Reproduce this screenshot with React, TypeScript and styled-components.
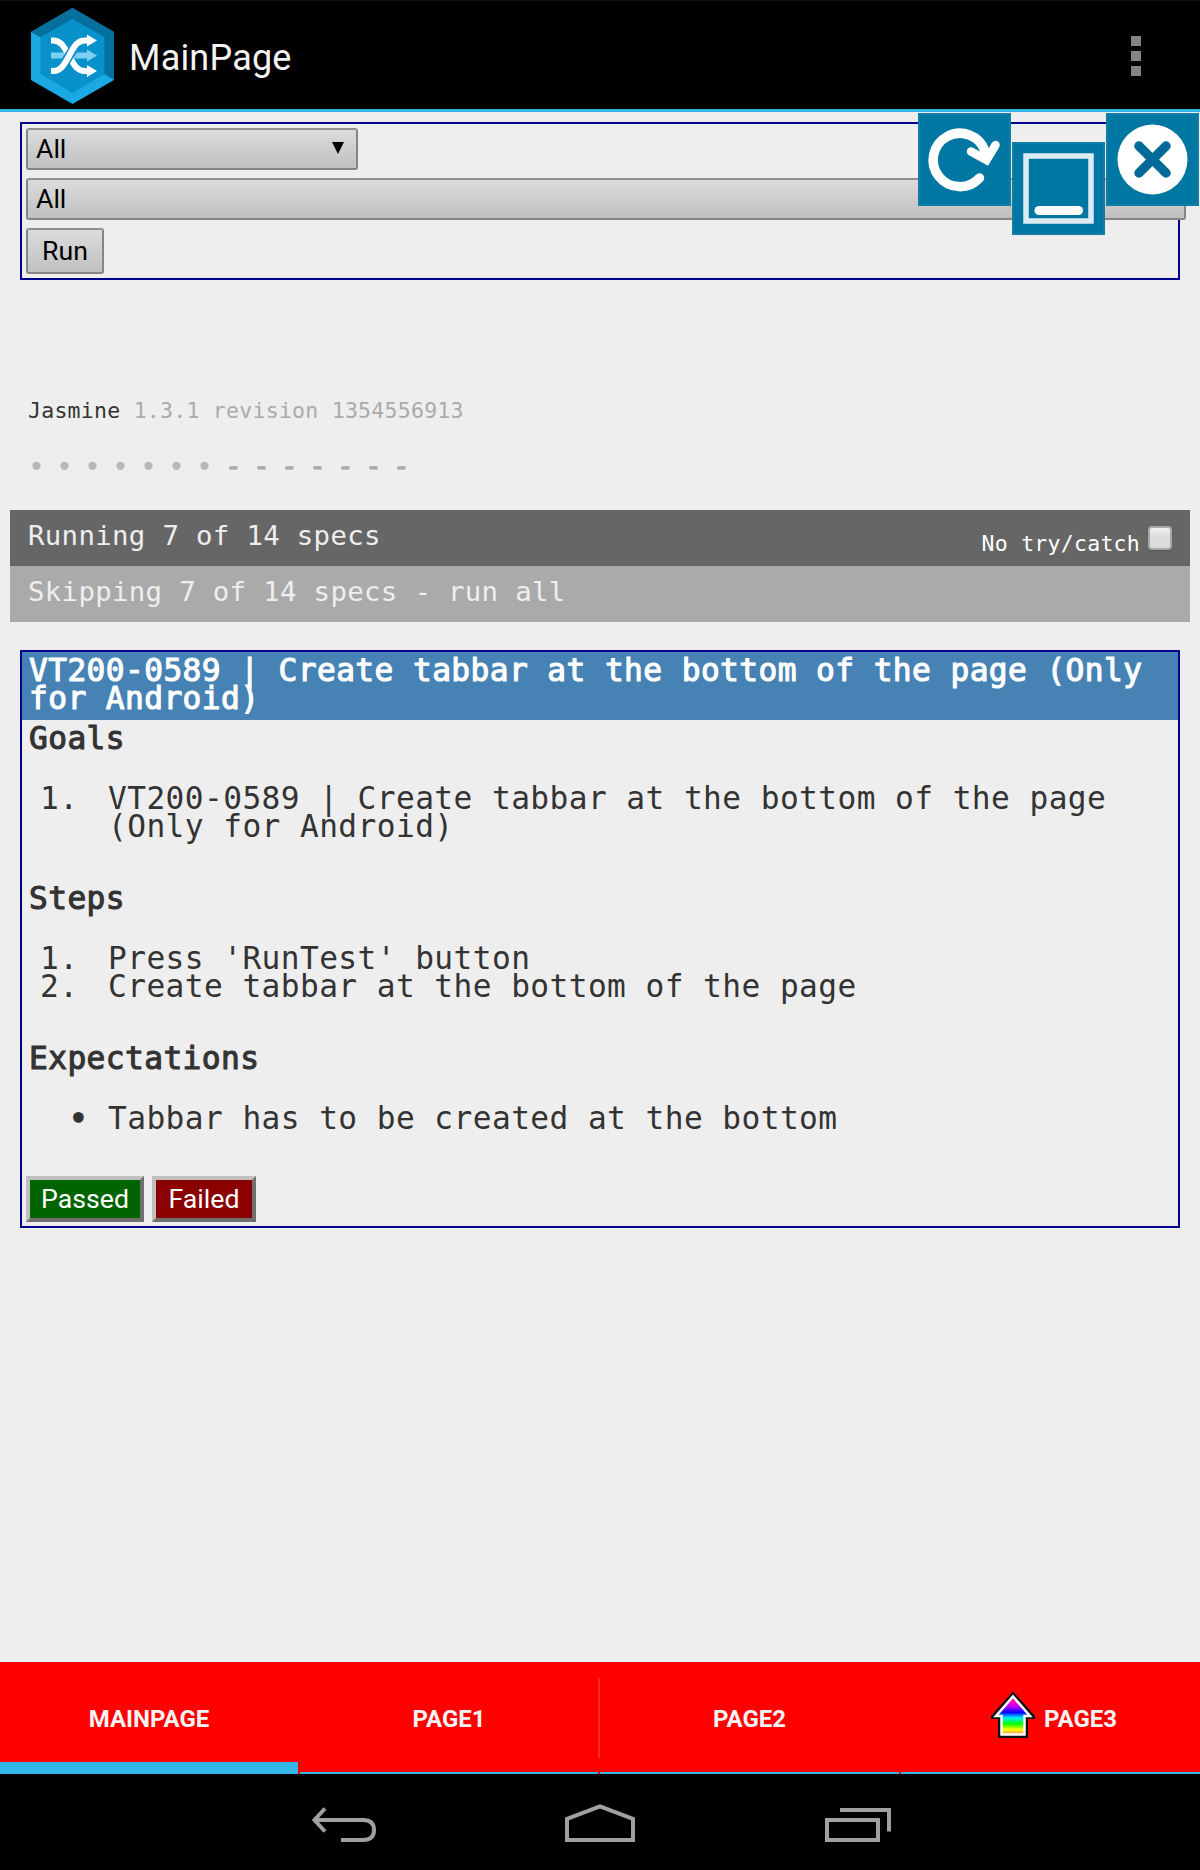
import React from "react";
import styled, { createGlobalStyle, css } from "styled-components";

const Global = createGlobalStyle`
  * { box-sizing: border-box; }
  body { margin: 0; background: #eee; }
`;

const Screen = styled.div`
  display: flex;
  flex-direction: column;
  position: relative;
  width: 1200px;
  height: 1870px;
  overflow: hidden;
  background: #eee;
  color: #333;
  font-family: "Droid Sans Mono", "DejaVu Sans Mono", monospace;
`;

const ActionBar = styled.header`
  display: flex;
  align-items: center;
  height: 112px;
  flex: none;
  padding: 0 59px 0 30px;
  background: #000;
  border-top: 1px solid #111;
  border-bottom: 3px solid #33b5e5;
`;

const LogoSvg = styled.svg`
  margin-top: 1px;
`;

const AppTitle = styled.h1`
  flex: 1;
  margin: 5px 0 0 13px;
  font: 400 36px/42px Roboto, sans-serif;
  letter-spacing: 0.2px;
  color: #f3f3f3;
`;

const Overflow = styled.div`
  display: grid;
  gap: 5px;
  margin-top: 1px;
`;

const Square = styled.i`
  width: 10px;
  height: 10px;
  background: #848484;
`;

const FloatingTools = styled.div`
  position: absolute;
  top: 113px;
  right: 1px;
  display: flex;
  gap: 1px;
  align-items: flex-start;
`;

const Tool = styled.div<{ $drop?: boolean }>`
  width: 93px;
  height: 93px;
  margin-top: ${(p) => (p.$drop ? 29 : 0)}px;
  background: #0077a2;
  box-shadow: inset 0 0 0 2px #0f7fa8;
  svg { display: block; }
`;

const Content = styled.main`
  flex: 1;
  padding: 10px 10px 0;
`;

const Filters = styled.section`
  display: flex;
  flex-direction: column;
  align-items: flex-start;
  gap: 8px;
  height: 158px;
  margin: 0 10px;
  padding: 4px;
  border: 2px solid #00008b;
`;

const control = css`
  border: 2px solid #858585;
  border-top-color: #909090;
  border-radius: 3px;
  background: linear-gradient(#dcdcdc, #c0c0c0);
  color: #000;
  font: 400 26.67px/32px Roboto, sans-serif;
`;

const Select = styled.div<{ $width: number }>`
  ${control}
  display: flex;
  justify-content: space-between;
  width: ${(p) => p.$width}px;
  height: 42px;
  padding: 3px 12px 0 8px;
  flex: none;
`;

const Caret = styled.i`
  width: 12px;
  height: 12px;
  margin-top: 9px;
  background: #000;
  clip-path: polygon(0 0, 100% 0, 50% 100%);
`;

const RunButton = styled.button`
  ${control}
  width: 78px;
  height: 46px;
  padding: 0;
`;

const Banner = styled.div`
  height: 28px;
  margin-top: 117px;
  padding-left: 18px;
  font-size: 21.5px;
  line-height: 28px;
  letter-spacing: 0.26px;
`;

const Version = styled.span`
  color: #aaa;
`;

const Symbols = styled.ul`
  display: flex;
  height: 28px;
  margin: 28px 0 29px;
  padding: 0 0 0 18px;
  list-style: none;
  font-size: 28px;
  line-height: 28px;
`;

const Mark = styled.li<{ $skipped?: boolean }>`
  width: 28px;
  padding-left: ${(p) => (p.$skipped ? 1 : 0)}px;
  color: ${(p) => (p.$skipped ? "#aaa" : "#b8b8b8")};
  -webkit-text-stroke: ${(p) => (p.$skipped ? "0.8px #aaa" : "0")};
`;

const Bar = styled.div<{ $light?: boolean }>`
  display: flex;
  justify-content: space-between;
  height: 56px;
  padding: 0 18px;
  background: ${(p) => (p.$light ? "#aaa" : "#666")};
  color: #eee;
  font-size: 27.4px;
  line-height: 52px;
  letter-spacing: 0.31px;
`;

const TryCatch = styled.label`
  display: flex;
  gap: 8px;
  color: #fff;
  font-size: 21.5px;
  line-height: 68px;
  letter-spacing: 0.26px;
`;

const Check = styled.i`
  width: 24px;
  height: 24px;
  margin-top: 16px;
  border: 2px solid #a8a8a8;
  border-radius: 4px;
  background: linear-gradient(#eee, #dcdcdc 50%);
  box-shadow: 0 1px 1px #555;
`;

const Spec = styled.section`
  height: 578px;
  margin: 28px 10px 0;
  border: 2px solid #00008b;
  font-size: 31.2px;
  line-height: 28px;
  letter-spacing: 0.42px;
`;

const SpecTitle = styled.h2`
  height: 68px;
  margin: 0;
  padding: 4px 6px 0 7px;
  background: #4682b4;
  color: #fff;
  font: inherit;
  -webkit-text-stroke: 1.1px #fff;
`;

const Part = styled.div`
  padding: 4px 6px 40px;
  h3 {
    margin: 0 0 32px 1px;
    font: inherit;
    -webkit-text-stroke: 1.1px #333;
  }
`;

const Item = styled.div`
  display: grid;
  grid-template-columns: 80px 1fr;
`;

const Marker = styled.span<{ $bullet?: boolean }>`
  padding-left: ${(p) => (p.$bullet ? 41 : 12)}px;
  -webkit-text-stroke: ${(p) => (p.$bullet ? "1.5px #333" : "0")};
`;

const Verdicts = styled.div`
  display: flex;
  gap: 8px;
  padding: 4px 0 0 4px;
`;

const Verdict = styled.button<{ $color: string; $width: number }>`
  width: ${(p) => p.$width}px;
  height: 46px;
  padding: 0;
  border: 4px solid;
  border-color: #c0c0c0 #6f6f6f #6f6f6f #c0c0c0;
  background: ${(p) => p.$color};
  color: #fff;
  font: 400 26.67px/34px Roboto, sans-serif;
`;

const TabBar = styled.nav`
  display: grid;
  grid-template-columns: 298px 298px 299px 299px;
  gap: 2px;
  height: 112px;
  flex: none;
  background: #f00;
`;

const Tab = styled.div<{ $active?: boolean; $icon?: boolean }>`
  position: relative;
  display: flex;
  align-items: center;
  justify-content: center;
  gap: 9px;
  padding: 2px 0 0 ${(p) => (p.$icon ? 7 : 0)}px;
  box-shadow: inset 0 ${(p) => (p.$active ? -12 : -2)}px #33b5e5;
  color: #f3f3f3;
  font: 700 24px/28px Roboto, sans-serif;
  & + &::before {
    content: "";
    position: absolute;
    left: -2px;
    top: 16px;
    width: 2px;
    height: 80px;
    background: #ff2a2a;
  }
`;

const HouseSvg = styled.svg`
  margin-bottom: 7px;
`;

const NavBar = styled.footer`
  display: flex;
  justify-content: center;
  gap: 176px;
  height: 96px;
  flex: none;
  padding-top: 26px;
  background: #000;
`;

const Logo = () => (
  <LogoSvg width="86" height="98" viewBox="30 7 86 98">
    <path d="M72.5 8 114 32v48L72.5 104 31 80V32Z" fill="#1ba9e3" />
    <path d="M72.5 8 114 32v48L104.5 74 72.5 56 40.5 37.5 31 32Z" fill="#056f9d" />
    <path d="m72.5 19 32 18v37l-32 19-32-19V37Z" fill="#0991cb" />
    <g fill="none" strokeWidth="6">
      <path d="M51 55.5h37" stroke="#7bcff2" />
      <path d="M51 40.500h2c7 0 10 4 16 15.500 6 11 9 15 16 15h3" stroke="#fff" />
      <path d="M58 69c4-2 7-6 11-13s7-11 11-13" stroke="#0991cb" strokeWidth="9.5" />
      <path d="M51 71h2c7 0 10-4 16-15 6-11.500 9-15.500 16-15.500h3" stroke="#fff" />
    </g>
    <path d="m87 49.500 10 6-10 6Z" fill="#7bcff2" />
    <path d="m87 34.500 10 6-10 6ZM87 65l10 6-10 6Z" fill="#fff" />
  </LogoSvg>
);

const HouseArrow = () => (
  <HouseSvg width="44" height="50" viewBox="0 0 44 50">
    <defs>
      <linearGradient id="rainbow" x1="0" y1="0" x2="0" y2="1">
        <stop offset="0" stopColor="#ff3030" />
        <stop offset=".16" stopColor="#f0c" />
        <stop offset=".28" stopColor="#a0f" />
        <stop offset=".42" stopColor="#00f" />
        <stop offset=".56" stopColor="#0ef" />
        <stop offset=".72" stopColor="#0f0" />
        <stop offset=".87" stopColor="#ff0" />
        <stop offset="1" stopColor="#ff9060" />
      </linearGradient>
    </defs>
    <path d="M22 5 40 25H34V44H10V25H4Z" fill="#111" stroke="#111" strokeWidth="6" />
    <path d="M22 5.500 39 25H33.500V43.500H10.500V25H5Z" fill="url(#rainbow)" stroke="#fff" strokeWidth="2.5" />
  </HouseSvg>
);

const numbered = (lines: string[]) =>
  lines.map((text, i) => (
    <Item key={text}>
      <Marker>{i + 1}.</Marker>
      <span>{text}</span>
    </Item>
  ));

const marks = Array.from({ length: 14 }, (_, i) => i >= 7);

export default function App() {
  return (
    <Screen>
      <Global />
      <ActionBar>
        <Logo />
        <AppTitle>MainPage</AppTitle>
        <Overflow>
          <Square />
          <Square />
          <Square />
        </Overflow>
      </ActionBar>
      <Content>
        <Filters>
          <Select $width={332}>
            All
            <Caret />
          </Select>
          <Select $width={1160}>All</Select>
          <RunButton>Run</RunButton>
        </Filters>
        <Banner>
          Jasmine <Version>1.3.1 revision 1354556913</Version>
        </Banner>
        <Symbols>
          {marks.map((skipped, i) => (
            <Mark key={i} $skipped={skipped}>{skipped ? "-" : "•"}</Mark>
          ))}
        </Symbols>
        <Bar>
          Running 7 of 14 specs
          <TryCatch>
            No try/catch
            <Check />
          </TryCatch>
        </Bar>
        <Bar $light>Skipping 7 of 14 specs - run all</Bar>
        <Spec>
          <SpecTitle>VT200-0589 | Create tabbar at the bottom of the page (Only for Android)</SpecTitle>
          <Part>
            <h3>Goals</h3>
            {numbered(["VT200-0589 | Create tabbar at the bottom of the page (Only for Android)"])}
          </Part>
          <Part>
            <h3>Steps</h3>
            {numbered(["Press 'RunTest' button", "Create tabbar at the bottom of the page"])}
          </Part>
          <Part>
            <h3>Expectations</h3>
            <Item>
              <Marker $bullet>•</Marker>
              <span>Tabbar has to be created at the bottom</span>
            </Item>
          </Part>
          <Verdicts>
            <Verdict $color="#006400" $width={118}>Passed</Verdict>
            <Verdict $color="#8b0000" $width={104}>Failed</Verdict>
          </Verdicts>
        </Spec>
      </Content>
      <FloatingTools>
        <Tool>
          <svg width="93" height="93" viewBox="0 0 93 93" fill="none" stroke="#fff" strokeWidth="9.5" strokeLinecap="round">
            <path d="M61.500 65A26.700 26.700 0 1 1 67 38" />
            <path d="M53 38.500 68.500 47 77.500 32" strokeWidth="8.5" />
          </svg>
        </Tool>
        <Tool $drop>
          <svg width="93" height="93" viewBox="0 0 93 93" fill="none" stroke="#fff">
            <rect x="14" y="14" width="65" height="65" stroke="#dcebf2" strokeWidth="5.5" />
            <path d="M27 68.500h39.500" strokeWidth="9" strokeLinecap="round" />
          </svg>
        </Tool>
        <Tool>
          <svg width="93" height="93" viewBox="0 0 93 93">
            <circle cx="46.5" cy="46.5" r="35" fill="#fff" />
            <path d="m33 33 27 27m0-27L33 60" stroke="#006b9b" strokeWidth="9.5" strokeLinecap="round" />
          </svg>
        </Tool>
      </FloatingTools>
      <TabBar>
        <Tab $active>MAINPAGE</Tab>
        <Tab>PAGE1</Tab>
        <Tab>PAGE2</Tab>
        <Tab $icon>
          <HouseArrow />
          PAGE3
        </Tab>
      </TabBar>
      <NavBar>
        <svg width="80" height="48" viewBox="304 1800 80 48" fill="none" stroke="#a0a0a0" strokeWidth="4">
          <path d="M325 1808.500 314.500 1820 325 1831.500M315 1820h48q11 0 11 10t-11 10h-22" />
        </svg>
        <svg width="80" height="48" viewBox="560 1800 80 48" fill="none" stroke="#a0a0a0" strokeWidth="4">
          <path d="M567 1840v-21l33-12.500 33 12.500v21Z" />
        </svg>
        <svg width="80" height="48" viewBox="816 1800 80 48" fill="none" stroke="#a0a0a0" strokeWidth="4">
          <path d="M827 1820h51v20h-51ZM840 1810h49v21.500" />
        </svg>
      </NavBar>
    </Screen>
  );
}
